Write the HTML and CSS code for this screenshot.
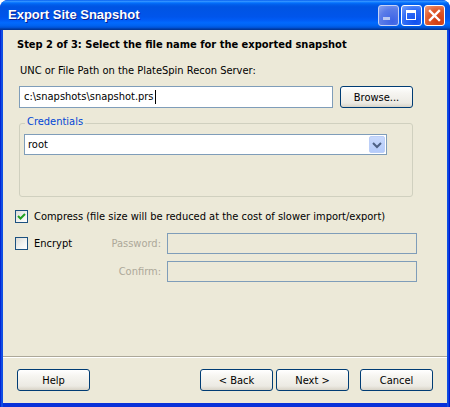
FILE: index.html
```html
<!DOCTYPE html>
<html>
<head>
<meta charset="utf-8">
<title>Export Site Snapshot</title>
<link rel="stylesheet" href="styles.css">
</head>
<body>
<div class="window">
  <div class="titlebar">
    <span class="title">Export Site Snapshot</span>
    <div class="tb-buttons">
      <span class="tb-btn tb-min"><svg width="19" height="19" viewBox="0 0 19 19"><rect x="4" y="11" width="7" height="3" fill="#b9c8f2"/></svg></span>
      <span class="tb-btn tb-max"><svg width="19" height="19" viewBox="0 0 19 19"><rect x="4.5" y="4.5" width="9" height="9" fill="none" stroke="#fff" stroke-width="1"/><rect x="4" y="4" width="10" height="3" fill="#fff"/></svg></span>
      <span class="tb-btn tb-close"><svg width="19" height="19" viewBox="0 0 19 19"><path d="M5 5 L14 14 M14 5 L5 14" stroke="#fff" stroke-width="2.4" stroke-linecap="square"/></svg></span>
    </div>
  </div>
  <div class="client">
    <div class="content">
      <div class="step">Step 2 of 3: Select the file name for the exported snapshot</div>
      <div class="label">UNC or File Path on the PlateSpin Recon Server:</div>
      <div class="path-row">
        <div class="textbox path">c:\snapshots\snapshot.prs<span class="caret"></span></div>
        <button class="btn browse">Browse...</button>
      </div>
      <div class="group">
        <span class="legend">Credentials</span>
        <div class="combo">
          <span class="combo-text">root</span>
          <span class="combo-btn"><svg width="16" height="17" viewBox="0 0 16 17"><path d="M4 7 L8 11 L12 7" fill="none" stroke="#4d6185" stroke-width="2"/></svg></span>
        </div>
      </div>
      <div class="check-row compress">
        <span class="check"><svg width="11" height="11" viewBox="0 0 11 11"><path d="M2 5 L4.5 7.5 L9 3" fill="none" stroke="#21a121" stroke-width="2"/></svg></span>
        <span>Compress (file size will be reduced at the cost of slower import/export)</span>
      </div>
      <div class="encrypt-grid">
        <div class="check-row">
          <span class="check"></span>
          <span>Encrypt</span>
        </div>
        <span class="pw-label">Password:</span>
        <div class="textbox disabled"></div>
        <span></span>
        <span class="pw-label">Confirm:</span>
        <div class="textbox disabled"></div>
      </div>
    </div>
    <div class="footer">
      <div class="buttons">
        <button class="btn">Help</button>
        <button class="btn back">&lt; Back</button>
        <button class="btn">Next &gt;</button>
        <button class="btn cancel">Cancel</button>
      </div>
    </div>
  </div>
</div>
</body>
</html>
```

FILE: styles.css
```css
* { box-sizing: border-box; }
html, body { margin: 0; padding: 0; }
body {
  width: 450px;
  height: 407px;
  overflow: hidden;
  background: #fff;
  font-family: Tahoma, "DejaVu Sans Condensed", "DejaVu Sans", sans-serif;
  font-size: 11px;
  color: #000;
}
.window {
  width: 450px;
  height: 407px;
  display: flex;
  flex-direction: column;
  border-radius: 8px 8px 0 0;
  overflow: hidden;
  background: linear-gradient(to right, #0019cf 0, #0831d9 1px, #166aee 2px, #0831d9 3px, #0831d9 447px, #166aee 448px, #0019cf 449px);
}
.titlebar {
  height: 30px;
  flex: none;
  display: flex;
  align-items: center;
  padding: 0 5px 0 8px;
  background: linear-gradient(to bottom, #0058ee 0%, #3593ff 4%, #288eff 6%, #127dff 8%, #036ffc 10%, #0262ee 14%, #0057e5 20%, #0054e3 24%, #0055eb 56%, #005bf5 66%, #026afe 76%, #0062ef 86%, #0052d6 92%, #0040ab 96%, #003092 100%);
}
.title {
  flex: 1;
  color: #fff;
  font-family: "Liberation Sans", sans-serif;
  font-weight: bold;
  font-size: 13px;
  text-shadow: 1px 1px 0 #0a1e8c;
  padding-bottom: 1px;
}
.tb-buttons { display: flex; gap: 2px; }
.tb-btn {
  width: 21px;
  height: 21px;
  border: 1px solid #fff;
  border-radius: 3px;
  display: block;
}
.tb-btn svg { display: block; }
.tb-min {
  border-color: #c6d2f5;
  background: radial-gradient(circle at 70% 80%, #3c63e6 0, #5a7ce8 60%, #8aa3ef 100%);
}
.tb-max {
  background: radial-gradient(circle at 70% 80%, #1150f0 0, #2e6bf5 55%, #79a2fa 100%);
}
.tb-close {
  background: radial-gradient(circle at 70% 80%, #cf3a10 0, #e05a2c 55%, #f0a080 100%);
}
.client {
  flex: 1;
  margin: 0 3px 4px;
  background: #ece9d8;
  display: flex;
  flex-direction: column;
}
.content {
  flex: 1;
  padding: 8px 0 0 12px;
  display: flex;
  flex-direction: column;
  align-items: flex-start;
}
.step {
  margin-left: 2px;
  font-weight: bold;
  line-height: 13px;
}
.label {
  margin-top: 13px;
  margin-left: 5px;
  line-height: 13px;
}
.path-row {
  margin-top: 9px;
  margin-left: 4px;
  display: flex;
  gap: 7px;
}
.textbox {
  height: 22px;
  border: 1px solid #7f9db9;
  background: #fff;
  padding: 0 4px;
  line-height: 20px;
  display: flex;
  align-items: center;
}
.textbox.path { width: 314px; }
.caret {
  width: 1px;
  height: 14px;
  background: #000;
  margin-left: 1px;
}
.textbox.disabled { background: #ece9d8; height: 21px; }
.btn {
  width: 73px;
  height: 22px;
  border: 1px solid #003c74;
  border-radius: 3px;
  background: linear-gradient(to bottom, #ffffff 0%, #f6f5f1 30%, #eceae3 80%, #d8d3c7 100%);
  font-family: inherit;
  font-size: 11px;
  color: #000;
  padding: 0;
}
.group {
  position: relative;
  margin-top: 15px;
  margin-left: 4px;
  width: 394px;
  height: 74px;
  border: 1px solid #d0d0bf;
  border-radius: 3px;
  padding: 10px 0 0 4px;
}
.legend {
  position: absolute;
  top: -9px;
  left: 5px;
  padding: 0 2px;
  background: #ece9d8;
  color: #0046d5;
  line-height: 13px;
}
.combo {
  width: 363px;
  height: 21px;
  border: 1px solid #7f9db9;
  background: #fff;
  display: flex;
  align-items: center;
  padding: 0 1px 0 3px;
}
.combo-text { flex: 1; }
.combo-btn {
  width: 16px;
  height: 17px;
  border-radius: 2px;
  background: linear-gradient(to bottom, #c8d9fc, #b4cbfa);
  border: 1px solid #bccff8;
}
.combo-btn svg { display: block; margin: -1px; }
.check-row {
  display: flex;
  align-items: center;
  gap: 6px;
  line-height: 13px;
}
.compress { margin-top: 13px; }
.check {
  width: 13px;
  height: 13px;
  border: 1px solid #1c5180;
  background: linear-gradient(135deg, #dcdcd7 0%, #f4f4f1 60%, #ffffff 100%);
  display: block;
}
.check svg { display: block; }
.encrypt-grid {
  margin-top: 10px;
  display: grid;
  grid-template-columns: 85px 67px 250px;
  grid-auto-rows: 21px;
  row-gap: 7px;
  align-items: center;
}
.pw-label {
  text-align: right;
  padding-right: 6px;
  color: #aca899;
}
.footer {
  flex: none;
  height: 47px;
  border-top: 1px solid #aca899;
  box-shadow: inset 0 1px 0 #fff;
  padding: 12px 14px 0;
}
.buttons {
  display: flex;
  gap: 3px;
}
.back { margin-left: auto; }
.cancel { margin-left: 8px; }
```
